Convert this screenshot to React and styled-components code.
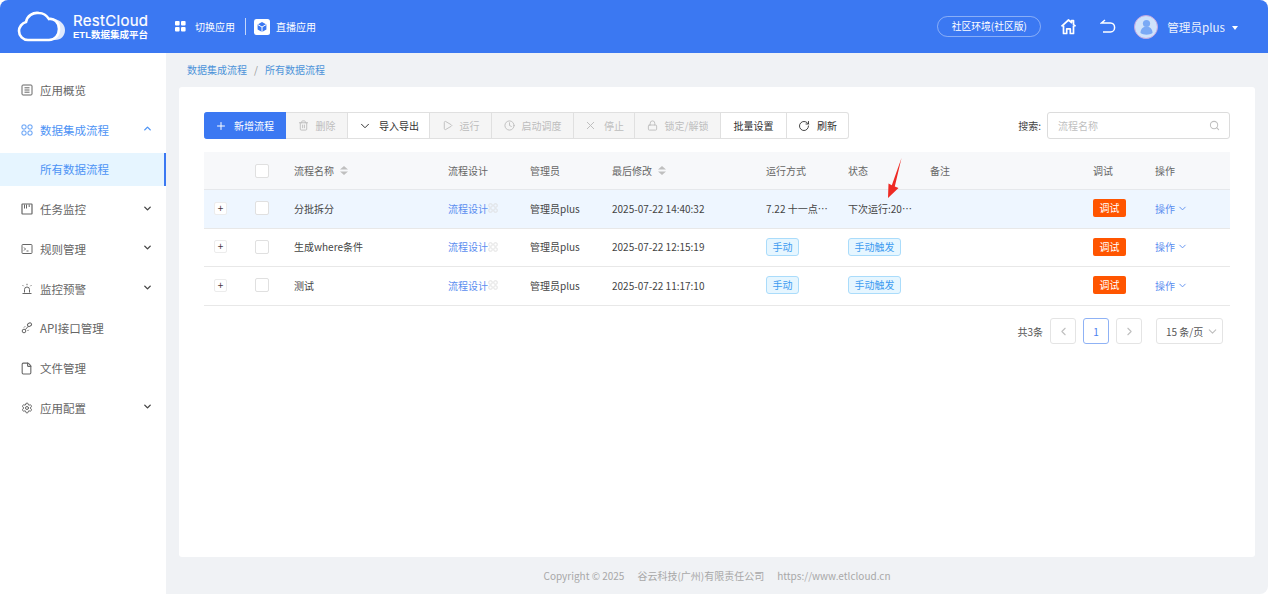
import React from "react";
import styled, { createGlobalStyle } from "styled-components";
import { ChevronDown, ChevronUp, ChevronLeft, ChevronRight, Plus, Trash2, Play, Clock, X, Lock, RotateCw, Search, Settings, File } from "lucide-react";

const GlobalStyle = createGlobalStyle`
	html, body {
		margin: 0;
		padding: 0;
		background: #fff;
		font-family: "Noto Sans CJK SC", "Noto Sans", sans-serif;
		color: #444;
		overflow: hidden;
	}
	* {
		box-sizing: border-box;
	}
`;

const CloudLogo = () => (
	<svg width="50" height="34" viewBox="0 0 50 34" fill="none">
		<path d="M37 9c6 1 11 5 11 11 0 6-4 10-10 10H30c5-1 9-4 9-10 0-5-3-8-2-11z" fill="#dfe9fd" />
		<path d="M11 30C6 30 2 26 2 21c0-4 3-8 7-9 1-6 7-10 13-9 4 0 8 3 10 6 5-1 10 3 10 10 0 6-4 11-10 11H11z" stroke="#fff" strokeWidth="2.6" fill="#3b78f2" />
	</svg>
);

const GridMark = () => (
	<svg width="11" height="11" viewBox="0 0 11 11" fill="#fff">
		<rect x="0" y="0" width="4.6" height="4.6" rx="1" />
		<rect x="6" y="0" width="4.6" height="4.6" rx="1" />
		<rect x="0" y="6" width="4.6" height="4.6" rx="1" />
		<rect x="6" y="6" width="4.6" height="4.6" rx="1" />
	</svg>
);

const CubeMark = () => (
	<svg width="16" height="16" viewBox="0 0 16 16">
		<rect width="16" height="16" rx="2.5" fill="#fff" />
		<path d="M8 3l4.4 2.5v5L8 13l-4.4-2.5v-5z" fill="#3b78f2" />
		<path d="M3.8 5.6L8 8l4.2-2.4M8 8v5" stroke="#fff" strokeWidth="1" fill="none" />
	</svg>
);

const HomeIcon = () => (
	<svg width="17" height="17" viewBox="0 0 17 17" fill="none" stroke="#fff" strokeWidth="1.7" strokeLinejoin="round">
		<path d="M1.5 8.3L8.5 2l3 2.6V2.6h2v3.8l2 1.9" />
		<path d="M3.5 7.5V15.5h3.2v-4.6h3.6v4.6h3.2V7.5" />
	</svg>
);

const BackIcon = () => (
	<svg width="16" height="15" viewBox="0 0 16 15" fill="none" stroke="#fff" strokeWidth="1.5">
		<path d="M5 1L1.5 4H10.5C13 4 14.6 6 14.6 8.4S13 13 10.5 13H3" />
	</svg>
);

const AvatarIcon = () => (
	<svg width="24" height="24" viewBox="0 0 24 24">
		<circle cx="12" cy="12" r="11.5" fill="#cfe2fb" stroke="#c4a6e0" strokeWidth="1" />
		<circle cx="12.5" cy="8.5" r="3.6" fill="#7aa9f5" />
		<path d="M6.5 18c0-4 2.5-6.5 6-6.5s6 2.500 6 6.500c-3 2.300-9 2.300-12 0z" fill="#7aa9f5" />
	</svg>
);

const iconProps = { width: 12, height: 12, viewBox: "0 0 12 12", fill: "none", stroke: "currentColor", strokeWidth: 1 };

const OverviewIcon = () => (
	<svg {...iconProps}>
		<rect x="1" y="1" width="10" height="10" rx="1" />
		<path d="M3.500 3.800h5M3.500 6h5M3.500 8.200h5" />
	</svg>
);

const FlowIcon = () => (
	<svg {...iconProps}>
		<rect x="1" y="1" width="4" height="4" rx="1.200" />
		<rect x="7" y="1" width="4" height="4" rx="1.200" />
		<rect x="1" y="7" width="4" height="4" rx="1.200" />
		<rect x="7" y="7" width="4" height="4" rx="1.200" />
	</svg>
);

const TaskIcon = () => (
	<svg {...iconProps}>
		<rect x="1" y="1" width="10" height="10" rx="0.500" strokeWidth="1.200" />
		<path d="M3.500 1.500v4M5.500 1.500v4M8.200 1.500v2.500" strokeWidth="1" />
	</svg>
);

const RuleIcon = () => (
	<svg {...iconProps}>
		<rect x="1" y="1.500" width="10" height="9" rx="0.800" />
		<path d="M3 4.500l1.500 1.500L3 7.500M5.500 8h2" />
	</svg>
);

const AlarmIcon = () => (
	<svg {...iconProps}>
		<path d="M3.500 9.500V6.500a2.500 2.500 0 0 1 5 0v3M1.500 10.500h9" />
		<path d="M6 .8v1.400M1.600 2.200l1 1M10.400 2.200l-1 1" />
	</svg>
);

const ApiIcon = () => (
	<svg {...iconProps}>
		<circle cx="3" cy="9" r="1.800" />
		<rect x="6.500" y="1.200" width="4" height="3" rx="1.200" transform="rotate(-35 8.500 2.700)" />
		<path d="M4.300 7.700L7 4.500M3 5.500l1.200-1.200M6.500 9l1.200-1.200" />
	</svg>
);

const Updown = () => (
	<SortMark>
		<svg width="8" height="11" viewBox="0 0 8 11" fill="#bfbfbf">
			<path d="M4 1L8 4.500H0zM4 10L0 6.500h8z" />
		</svg>
	</SortMark>
);

const navItems = [
	{ label: "应用概览", icon: <OverviewIcon /> },
	{ label: "数据集成流程", icon: <FlowIcon />, open: true, arrow: true },
	{ label: "所有数据流程", sub: true },
	{ label: "任务监控", icon: <TaskIcon />, arrow: true },
	{ label: "规则管理", icon: <RuleIcon />, arrow: true },
	{ label: "监控预警", icon: <AlarmIcon />, arrow: true },
	{ label: "API接口管理", icon: <ApiIcon /> },
	{ label: "文件管理", icon: <File size={13} strokeWidth={2} /> },
	{ label: "应用配置", icon: <Settings size={12} strokeWidth={2} />, arrow: true },
];

const tools = [
	{ label: "新增流程", icon: <Plus size={12} strokeWidth={2} />, w: 82, kind: "primary" },
	{ label: "删除", icon: <Trash2 size={11} strokeWidth={2} />, w: 62, kind: "disabled" },
	{ label: "导入导出", icon: <ChevronDown size={14} strokeWidth={1.7} />, w: 82 },
	{ label: "运行", icon: <Play size={11} strokeWidth={2} />, w: 62, kind: "disabled" },
	{ label: "启动调度", icon: <Clock size={11} strokeWidth={2} />, w: 82, kind: "disabled" },
	{ label: "停止", icon: <X size={13} strokeWidth={1.8} />, w: 61, kind: "disabled" },
	{ label: "锁定/解锁", icon: <Lock size={11} strokeWidth={2} />, w: 86, kind: "disabled" },
	{ label: "批量设置", w: 66 },
	{ label: "刷新", icon: <RotateCw size={12} strokeWidth={1.8} />, w: 62 },
];

const rows = [
	{ name: "分批拆分", time: "2025-07-22 14:40:32", run: "7.22 十一点…", status: "下次运行:20…", active: true },
	{ name: "生成where条件", time: "2025-07-22 12:15:19", run: "手动", status: "手动触发", tags: true },
	{ name: "测试", time: "2025-07-22 11:17:10", run: "手动", status: "手动触发", tags: true },
];

export default function App() {
	return (
		<Page>
			<GlobalStyle />
			<Header>
				<Brand>
					<CloudLogo />
					<BrandText>
						<strong>RestCloud</strong>
						<span>ETL数据集成平台</span>
					</BrandText>
				</Brand>
				<HeaderLink>
					<GridMark />
					切换应用
				</HeaderLink>
				<HeaderDivider />
				<HeaderLink $gap={6}>
					<CubeMark />
					直播应用
				</HeaderLink>
				<HeaderRight>
					<EnvBadge>社区环境(社区版)</EnvBadge>
					<HomeIcon />
					<BackIcon />
					<UserBox>
						<AvatarIcon />
						<span>管理员plus</span>
						<Caret />
					</UserBox>
				</HeaderRight>
			</Header>

			<Body>
				<Sidebar>
					{navItems.map((item) => (
						<NavItem key={item.label} $open={item.open} $sub={item.sub}>
							{item.icon && <NavIcon>{item.icon}</NavIcon>}
							{item.label}
							{item.arrow && (
								<NavArrow $open={item.open}>
									{item.open ? <ChevronUp size={11} strokeWidth={3} /> : <ChevronDown size={11} strokeWidth={3} />}
								</NavArrow>
							)}
						</NavItem>
					))}
				</Sidebar>

				<Main>
					<Breadcrumb>
						<span>数据集成流程</span>
						<i>/</i>
						<span>所有数据流程</span>
					</Breadcrumb>
					<Card>
						<Toolbar>
							<ButtonGroup>
								{tools.map((tool) => (
									<ToolButton key={tool.label} $w={tool.w} $kind={tool.kind}>
										{tool.icon}
										{tool.label}
									</ToolButton>
								))}
							</ButtonGroup>
							<SearchBox>
								<label>搜索:</label>
								<SearchField>
									<span>流程名称</span>
									<Search size={11} strokeWidth={2.2} />
								</SearchField>
							</SearchBox>
						</Toolbar>

						<HeadRow>
							<Cell />
							<Cell>
								<Check />
							</Cell>
							<Cell>
								流程名称
								<Updown />
							</Cell>
							<Cell>流程设计</Cell>
							<Cell>管理员</Cell>
							<Cell>
								最后修改
								<Updown />
							</Cell>
							<Cell>运行方式</Cell>
							<Cell>状态</Cell>
							<Cell>备注</Cell>
							<Cell>调试</Cell>
							<Cell>操作</Cell>
						</HeadRow>

						{rows.map((row) => (
							<Row key={row.name} $active={row.active}>
								<Cell>
									<Expand>+</Expand>
								</Cell>
								<Cell>
									<Check />
								</Cell>
								<Cell>{row.name}</Cell>
								<Cell>
									<TextLink>流程设计</TextLink>
									<FlowIconSmall>
										<FlowIcon />
									</FlowIconSmall>
								</Cell>
								<Cell>管理员plus</Cell>
								<Cell>{row.time}</Cell>
								<Cell>{row.tags ? <Tag>{row.run}</Tag> : row.run}</Cell>
								<Cell>{row.tags ? <Tag>{row.status}</Tag> : row.status}</Cell>
								<Cell />
								<Cell>
									<DebugButton>调试</DebugButton>
								</Cell>
								<Cell>
									<TextLink>操作</TextLink>
									<OpArrow>
										<ChevronDown size={11} strokeWidth={2} />
									</OpArrow>
								</Cell>
							</Row>
						))}

						<Pagination>
							<span>共3条</span>
							<PageButton $muted>
								<ChevronLeft size={13} strokeWidth={2} />
							</PageButton>
							<PageButton $current>1</PageButton>
							<PageButton $muted>
								<ChevronRight size={13} strokeWidth={2} />
							</PageButton>
							<PageSize>
								15 条/页
								<ChevronDown size={13} strokeWidth={2} color="#bfbfbf" />
							</PageSize>
						</Pagination>
					</Card>
					<Footer>
						<span>Copyright © 2025</span>
						<span>谷云科技(广州)有限责任公司</span>
						<span>https://www.etlcloud.cn</span>
					</Footer>
				</Main>
			</Body>

			<RedArrow width="16" height="42" viewBox="0 0 16 42">
				<path d="M14.500 0L7.800 28.500 11.500 30 1 40 1.500 25.500 4.800 27.200z" fill="#ee2a24" />
			</RedArrow>
		</Page>
	);
}

const Page = styled.div`
	position: relative;
	display: flex;
	flex-direction: column;
	width: 1268px;
	height: 594px;
	overflow: hidden;
`;

const Header = styled.header`
	display: flex;
	align-items: center;
	flex: none;
	height: 53px;
	padding-left: 17px;
	background: #3b78f2;
	border-radius: 8px 8px 0 0;
	color: #fff;
	font-size: 10px;
`;

const Brand = styled.div`
	display: flex;
	align-items: center;
	gap: 6px;
	width: 158px;
`;

const BrandText = styled.div`
	display: flex;
	flex-direction: column;

	strong {
		font-family: "Inter", sans-serif;
		font-size: 15px;
		font-weight: 400;
		line-height: 17px;
		letter-spacing: 0.3px;
		-webkit-text-stroke: 0.2px #fff;
	}

	span {
		font-family: "Liberation Sans", "Noto Sans CJK SC", sans-serif;
		font-size: 9.500px;
		font-weight: 700;
		line-height: 12px;
		white-space: nowrap;
	}
`;

const HeaderLink = styled.div`
	display: flex;
	align-items: center;
	gap: ${(p) => p.$gap || 9}px;
`;

const HeaderDivider = styled.div`
	width: 1px;
	height: 17px;
	margin: 0 8px 0 10px;
	background: rgba(255, 255, 255, 0.7);
`;

const HeaderRight = styled.div`
	display: flex;
	align-items: center;
	margin-left: auto;
	padding-right: 30px;

	> svg:nth-of-type(1) {
		margin-left: 19px;
	}
	> svg:nth-of-type(2) {
		margin-left: 23px;
	}
`;

const EnvBadge = styled.div`
	width: 104px;
	height: 21px;
	border: 1px solid rgba(255, 255, 255, 0.4);
	border-radius: 11px;
	font-size: 9.800px;
	line-height: 19px;
	text-align: center;
`;

const UserBox = styled.div`
	display: flex;
	align-items: center;
	margin-left: 18px;
	font-size: 11.600px;

	span {
		margin-left: 9px;
		opacity: 0.9;
	}
`;

const Caret = styled.i`
	width: 0;
	height: 0;
	margin: 2px 0 0 7px;
	border: 3.500px solid transparent;
	border-top: 4px solid #fff;
	border-bottom: 0;
`;

const Body = styled.div`
	display: flex;
	flex: 1;
	min-height: 0;
`;

const Sidebar = styled.nav`
	flex: none;
	width: 166px;
	padding-top: 17px;
	background: #fff;
`;

const NavItem = styled.div`
	position: relative;
	display: flex;
	align-items: center;
	height: ${(p) => (p.$sub ? "33px" : "39.750px")};
	margin: ${(p) => (p.$sub ? "3.400px 0" : 0)};
	padding-left: ${(p) => (p.$sub ? "40px" : "20px")};
	background: ${(p) => (p.$sub ? "#e6f5ff" : "transparent")};
	border-right: ${(p) => (p.$sub ? "2px solid #3b78f2" : "0")};
	color: ${(p) => (p.$open || p.$sub ? "#4d93f5" : "#666")};
	font-size: 11.500px;
`;

const NavIcon = styled.span`
	display: flex;
	justify-content: center;
	width: 13px;
	margin-right: 7px;
`;

const NavArrow = styled.span`
	display: flex;
	position: absolute;
	right: 13px;
	top: 50%;
	margin-top: -6.500px;
	color: ${(p) => (p.$open ? "#4d93f5" : "#444")};
`;

const Main = styled.main`
	display: flex;
	flex: 1;
	flex-direction: column;
	min-width: 0;
	background: #f0f2f5;
	border-radius: 0 0 8px 0;
`;

const Breadcrumb = styled.div`
	display: flex;
	align-items: center;
	gap: 7px;
	height: 34px;
	padding-bottom: 1px;
	padding-left: 21px;
	color: #4d93d9;
	font-size: 10px;

	i {
		color: #999;
		font-style: normal;
	}
`;

const Card = styled.section`
	flex: none;
	height: 470px;
	margin: 0 13px;
	padding: 25px 25px 0;
	background: #fff;
	border-radius: 3px;
`;

const Toolbar = styled.div`
	display: flex;
	align-items: center;
	justify-content: space-between;
	height: 27px;
	margin-bottom: 13px;
`;

const ButtonGroup = styled.div`
	display: flex;
`;

const ToolButton = styled.div`
	display: flex;
	align-items: center;
	justify-content: center;
	gap: 7px;
	width: ${(p) => p.$w}px;
	height: 27px;
	background: ${(p) => (p.$kind === "primary" ? "#3b78f2" : p.$kind === "disabled" ? "#f5f5f5" : "#fff")};
	border: 1px solid ${(p) => (p.$kind === "primary" ? "#3b78f2" : "#e0e0e0")};
	border-left: 0;
	color: ${(p) => (p.$kind === "primary" ? "#fff" : p.$kind === "disabled" ? "#bdbdbd" : "#333")};
	font-size: 10px;

	&:first-child {
		border-radius: 3px 0 0 3px;
	}
	&:last-child {
		border-radius: 0 3px 3px 0;
	}
`;

const SearchBox = styled.div`
	display: flex;
	align-items: center;
	gap: 6px;
	color: #444;
	font-size: 10px;
`;

const SearchField = styled.div`
	display: flex;
	align-items: center;
	justify-content: space-between;
	width: 183px;
	height: 27px;
	padding: 0 9px 0 10px;
	border: 1px solid #dcdcdc;
	border-radius: 3px;
	color: #bfbfbf;
`;

const columns = "51px 39px 154px 82px 82px 154px 82px 82px 163px 62px 75px";

const HeadRow = styled.div`
	display: grid;
	grid-template-columns: ${columns};
	height: 38px;
	background: #f7f8fa;
	border-bottom: 1px solid #e6e8eb;
	color: #666;
	font-size: 10px;
`;

const Row = styled.div`
	display: grid;
	grid-template-columns: ${columns};
	height: 38.600px;
	padding-bottom: 1px;
	background: ${(p) => (p.$active ? "#eef6ff" : "#fff")};
	border-bottom: 1px solid #e8e8e8;
	color: #444;
	font-size: 10px;
`;

const Cell = styled.div`
	display: flex;
	align-items: center;
	min-width: 0;
	white-space: nowrap;
`;

const Check = styled.span`
	width: 14px;
	height: 14px;
	background: #fff;
	border: 1px solid #e0e0e0;
	border-radius: 2px;
`;

const Expand = styled.span`
	width: 13px;
	height: 13px;
	margin-left: 10px;
	background: #fff;
	border: 1px solid #ececec;
	border-radius: 2px;
	color: #4a3a40;
	font-size: 10px;
	line-height: 10px;
	text-align: center;
`;

const SortMark = styled.span`
	display: flex;
	margin-left: 6px;
`;

const TextLink = styled.span`
	color: #5b8def;
`;

const OpArrow = styled.span`
	display: flex;
	margin-left: 2px;
	color: #5b8def;
`;

const FlowIconSmall = styled.span`
	display: flex;
	color: #dcdcdc;

	svg {
		width: 10px;
		height: 10px;
	}
`;

const Tag = styled.span`
	height: 18px;
	padding: 0 5.500px;
	background: #e6f6ff;
	border: 1px solid #aadcfb;
	border-radius: 3px;
	color: #3d9bf0;
	line-height: 16px;
`;

const DebugButton = styled.span`
	width: 33px;
	height: 18px;
	background: #ff5500;
	border-radius: 2px;
	color: #fff;
	line-height: 18px;
	text-align: center;
`;

const Pagination = styled.div`
	display: flex;
	align-items: center;
	justify-content: flex-end;
	gap: 7px;
	height: 26px;
	margin-top: 12.400px;
	padding-right: 7px;
	color: #555;
	font-size: 10px;
`;

const PageButton = styled.span`
	display: flex;
	align-items: center;
	justify-content: center;
	width: 26px;
	height: 26px;
	border: 1px solid ${(p) => (p.$current ? "#8fb2f5" : "#e4e4e4")};
	border-radius: 3px;
	color: ${(p) => (p.$muted ? "#bfbfbf" : "#4d7ff0")};
`;

const PageSize = styled.div`
	display: flex;
	align-items: center;
	justify-content: space-between;
	width: 67px;
	height: 26px;
	margin-left: 7px;
	padding: 0 3px 0 9px;
	border: 1px solid #e4e4e4;
	border-radius: 3px;
`;

const Footer = styled.footer`
	display: flex;
	flex: 1;
	align-items: center;
	justify-content: center;
	gap: 13px;
	padding-bottom: 1px;
	color: #a8a8a8;
	font-size: 10px;
`;

const RedArrow = styled.svg`
	position: absolute;
	left: 887px;
	top: 158px;
`;
